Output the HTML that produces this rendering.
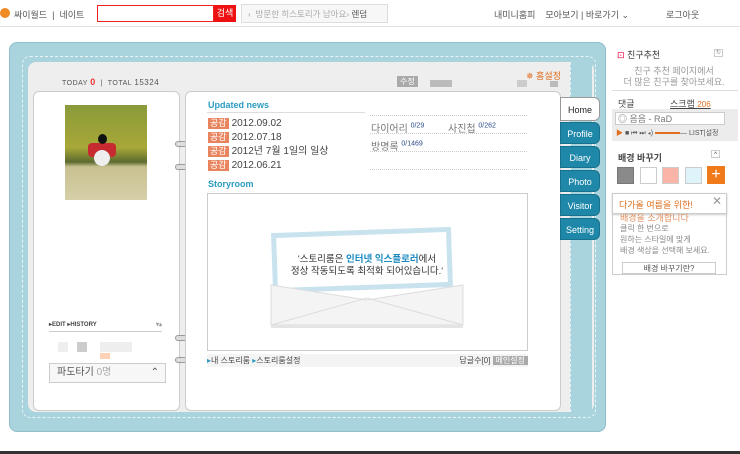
<!DOCTYPE html>
<html><head><meta charset="utf-8"><style>
*{margin:0;padding:0;box-sizing:border-box}
body{width:740px;height:454px;background:#fff;font-family:"Liberation Sans","Noto Sans CJK KR",sans-serif;position:relative;overflow:hidden;font-size:11px;color:#333}
.a{position:absolute}
.top{left:0;top:0;width:740px;height:27px;border-bottom:1px solid #e2e2e2;font-size:9px;color:#555}
.tab{left:560px;width:40px;height:22px;background:#1f88a8;color:#fff;font-size:9px;text-align:center;line-height:22px;border-radius:0 6px 6px 0;border:1px solid #17708c}
.gk{display:inline-block;background:#e8845e;color:#fff;font-size:9px;padding:0 2px;margin-right:3px;line-height:11px}
.dot{border-top:1px dotted #ccc}
</style></head><body>
<div class="a top">
 <div class="a" style="left:0;top:8px;width:10px;height:10px;border-radius:50%;background:#f08a24"></div>
 <span class="a" style="left:14px;top:8px">싸이월드 &nbsp;|&nbsp; 네이트</span>
 <div class="a" style="left:97px;top:5px;width:117px;height:17px;border:1px solid #e22"></div>
 <div class="a" style="left:214px;top:5px;width:22px;height:17px;background:#e11;color:#fff;font-size:9px;line-height:17px;text-align:center">검색</div>
 <div class="a" style="left:241px;top:4px;width:147px;height:19px;border:1px solid #ddd;background:#f7f7f7;color:#aaa;font-size:8.5px;line-height:18px;padding-left:6px">‹ &nbsp;방문한 히스토리가 남아요› <span style="color:#555">렌덤</span></div>
 <span class="a" style="left:494px;top:8px">내미니홈피 &nbsp;&nbsp; 모아보기 | 바로가기 ⌄</span>
 <span class="a" style="left:666px;top:8px">로그아웃</span>
</div>
<div class="a" style="left:0;top:451px;width:740px;height:3px;background:#333"></div>
<!-- frame -->
<div class="a" style="left:9px;top:42px;width:597px;height:390px;background:#a9d3dd;border-radius:8px;border:1px solid #8fbfcb"></div>
<div class="a" style="left:22px;top:56px;width:574px;height:362px;border:1px dashed #e8f4f7;border-radius:8px"></div>
<div class="a" style="left:28px;top:62px;width:566px;height:350px;background:#eeeeee;border-radius:8px"></div>
<div class="a" style="left:570px;top:62px;width:22px;height:350px;background:#a9d3dd;border-left:1px dashed #e8f4f7"></div>
<div class="a" style="left:62px;top:77px;font-size:7px;color:#555;letter-spacing:.5px">TODAY <b style="color:#e33;font-size:9px">0</b> &nbsp;|&nbsp; TOTAL <span style="font-size:8px">15324</span></div>
<div class="a" style="left:397px;top:76px;background:#aaa;color:#fff;font-size:8px;padding:0 3px">수정</div>
<div class="a" style="left:430px;top:80px;width:22px;height:7px;background:#bbb"></div>
<div class="a" style="left:517px;top:80px;width:10px;height:7px;background:#ccc"></div>
<div class="a" style="left:550px;top:81px;width:8px;height:6px;background:#bbb"></div>
<div class="a" style="left:526px;top:69px;color:#e06a1a;font-size:9px">✵ 홈설정</div>
<!-- left page -->
<div class="a" style="left:33px;top:91px;width:147px;height:320px;background:#fff;border:1px solid #ccc;border-radius:6px"></div>
<div class="a" style="left:65px;top:105px;width:82px;height:95px;background:linear-gradient(#8a9a3a,#a8a838 45%,#5c6a30 60%,#c8c090 65%,#d6d0a8)"></div>
<div class="a" style="left:88px;top:143px;width:28px;height:14px;background:#c72a30;border-radius:4px"></div>
<div class="a" style="left:94px;top:150px;width:16px;height:16px;background:#eee;border-radius:50%"></div>
<div class="a" style="left:98px;top:134px;width:9px;height:10px;background:#111;border-radius:50%"></div>
<div class="a" style="left:49px;top:321px;width:113px;font-size:6px;font-weight:bold;color:#444;border-bottom:1px solid #ccc;padding-bottom:3px">▸EDIT ▸HISTORY<span style="float:right;color:#999">▾▴</span></div>
<div class="a" style="left:58px;top:342px;width:10px;height:10px;background:#eee"></div>
<div class="a" style="left:77px;top:342px;width:10px;height:10px;background:#ccc"></div>
<div class="a" style="left:100px;top:342px;width:32px;height:10px;background:#eee"></div>
<div class="a" style="left:100px;top:353px;width:10px;height:6px;background:#fcd3b7"></div>
<div class="a" style="left:49px;top:363px;width:117px;height:20px;border:1px solid #ccc;background:#f7f7f7;font-size:10px;line-height:18px;padding-left:7px;color:#555">파도타기 <span style="color:#aaa">0명</span><span style="float:right;margin-right:6px">⌃</span></div>
<!-- rings -->
<div class="a" style="left:175px;top:141px;width:14px;height:6px;border:1px solid #999;border-radius:3px;background:#ddd"></div>
<div class="a" style="left:175px;top:164px;width:14px;height:6px;border:1px solid #999;border-radius:3px;background:#ddd"></div>
<div class="a" style="left:175px;top:335px;width:14px;height:6px;border:1px solid #999;border-radius:3px;background:#ddd"></div>
<div class="a" style="left:175px;top:357px;width:14px;height:6px;border:1px solid #999;border-radius:3px;background:#ddd"></div>
<!-- right page -->
<div class="a" style="left:185px;top:91px;width:376px;height:320px;background:#fff;border:1px solid #ccc;border-radius:6px"></div>
<div class="a" style="left:208px;top:100px;font-size:9px;font-weight:bold;color:#2a9bbf">Updated news</div>
<div class="a" style="left:207px;top:112px;width:158px;border-top:1px solid #ddd"></div>
<div class="a" style="left:208px;top:117px;font-size:10px;line-height:14px;color:#444">
<div><span class="gk">공감</span>2012.09.02</div><div><span class="gk">공감</span>2012.07.18</div><div><span class="gk">공감</span>2012년 7월 1일의 일상</div><div><span class="gk">공감</span>2012.06.21</div></div>
<div class="a dot" style="left:370px;top:115px;width:157px"></div>
<div class="a dot" style="left:370px;top:133px;width:157px"></div>
<div class="a dot" style="left:370px;top:151px;width:157px"></div>
<div class="a dot" style="left:370px;top:169px;width:157px"></div>
<div class="a" style="left:371px;top:120px;font-size:10px;color:#777">다이어리 <sup style="font-size:7px;color:#2a4a8a">0/29</sup></div>
<div class="a" style="left:448px;top:120px;font-size:10px;color:#777">사진첩 <sup style="font-size:7px;color:#2a4a8a">0/262</sup></div>
<div class="a" style="left:371px;top:138px;font-size:10px;color:#777">방명록 <sup style="font-size:7px;color:#2a4a8a">0/1469</sup></div>
<div class="a" style="left:208px;top:179px;font-size:9px;font-weight:bold;color:#2a9bbf">Storyroom</div>
<div class="a" style="left:207px;top:193px;width:321px;height:158px;border:1px solid #ccc"></div>
<div class="a" style="left:272px;top:230px;width:180px;height:60px;background:#fff;border:5px solid #c9e3ee;transform:rotate(-2deg)"></div>
<svg class="a" style="left:270px;top:284px" width="194" height="46"><polygon points="1,1 97,16 193,1 193,41 1,41" fill="#f4f4f4" stroke="#ddd"/><polyline points="1,41 97,14 193,41" fill="none" stroke="#ddd"/><rect x="1" y="41" width="192" height="3" fill="#e4e4e4"/></svg>
<div class="a" style="left:270px;top:254px;width:194px;text-align:center;font-size:9.5px;line-height:12px;color:#333">'스토리룸은 <b style="color:#1a8ac0">인터넷 익스플로러</b>에서<br>정상 작동되도록 최적화 되어있습니다.'</div>
<div class="a" style="left:207px;top:354px;width:321px;height:13px;background:#f4f4f4;font-size:8px;color:#444;line-height:13px"><span style="color:#2a9bbf">▸</span>내 스토리룸 <span style="color:#2a9bbf">▸</span>스토리룸설정<span style="float:right">답글수[0] <span style="background:#aaa;color:#fff;padding:0 3px">메인설정</span></span></div>
<!-- tabs -->
<div class="a tab" style="top:97px;height:24px;line-height:24px;background:#fff;color:#222;border-color:#999">Home</div>
<div class="a tab" style="top:122px">Profile</div>
<div class="a tab" style="top:146px">Diary</div>
<div class="a tab" style="top:170px">Photo</div>
<div class="a tab" style="top:194px">Visitor</div>
<div class="a tab" style="top:218px">Setting</div>
<!-- sidebar -->
<div class="a" style="left:617px;top:48px;font-size:9px;color:#333"><span style="color:#e04">⊡</span> 친구추천</div>
<div class="a" style="left:714px;top:49px;width:9px;height:8px;border:1px solid #ccc;font-size:6px;line-height:6px;text-align:center;color:#888">↻</div>
<div class="a" style="left:612px;top:66px;width:124px;text-align:center;font-size:9px;line-height:11px;color:#999">친구 추천 페이지에서<br>더 많은 친구를 찾아보세요.</div>
<div class="a" style="left:612px;top:90px;width:126px;border-top:1px solid #ddd"></div>
<div class="a" style="left:618px;top:97px;font-size:9px;color:#444">댓글</div>
<div class="a" style="left:670px;top:97px;font-size:9px;color:#444;text-decoration:underline">스크랩 <span style="color:#e07020;font-size:8px">206</span></div>
<div class="a" style="left:612px;top:109px;width:126px;height:32px;background:#ececec"></div>
<div class="a" style="left:615px;top:112px;width:110px;height:13px;background:#fff;border:1px solid #ccc;font-size:9px;color:#777;line-height:12px;padding-left:2px">◎ 음음 - RaD</div>
<div class="a" style="left:616px;top:128px;font-size:7px;color:#555"><span style="color:#e07020">▶</span> ■ ⏮ ⏭ ◂) <span style="display:inline-block;width:25px;height:2px;background:#e07020;vertical-align:middle"></span>— LIST|설정</div>
<div class="a" style="left:618px;top:151px;font-size:9px;font-weight:bold;color:#444">배경 바꾸기</div>
<div class="a" style="left:711px;top:150px;width:9px;height:8px;border:1px solid #ccc;font-size:6px;text-align:center;line-height:8px">^</div>
<div class="a" style="left:617px;top:167px;width:17px;height:17px;background:#8a8a8a;border:1px solid #777"></div>
<div class="a" style="left:640px;top:167px;width:17px;height:17px;background:#fff;border:1px solid #ccc"></div>
<div class="a" style="left:662px;top:167px;width:17px;height:17px;background:#fbb5a8;border:1px solid #ccc"></div>
<div class="a" style="left:685px;top:167px;width:17px;height:17px;background:#dff3fb;border:1px solid #ccc"></div>
<div class="a" style="left:707px;top:166px;width:18px;height:18px;background:#f07a1a;color:#fff;font-size:16px;line-height:18px;text-align:center">+</div>
<div class="a" style="left:612px;top:193px;width:115px;height:82px;border:1px solid #ccc;background:#fff"></div>
<div class="a" style="left:612px;top:193px;width:115px;height:21px;border:1px solid #ccc;background:#fff;box-shadow:0 1px 2px #ccc"></div>
<div class="a" style="left:619px;top:198px;font-size:9px;color:#e07020">다가올 여름을 위한!</div>
<div class="a" style="left:712px;top:194px;font-size:12px;color:#999">✕</div>
<div class="a" style="left:620px;top:212px;font-size:9px;line-height:12px;color:#e09060">배경을 소개합니다</div>
<div class="a" style="left:620px;top:223px;font-size:8px;line-height:11px;color:#888">클릭 한 번으로<br>원하는 스타일에 맞게<br>배경 색상을 선택해 보세요.</div>
<div class="a" style="left:622px;top:262px;width:94px;height:12px;border:1px solid #ccc;font-size:8px;text-align:center;line-height:11px;color:#555">배경 바꾸기란?</div>
</body></html>
